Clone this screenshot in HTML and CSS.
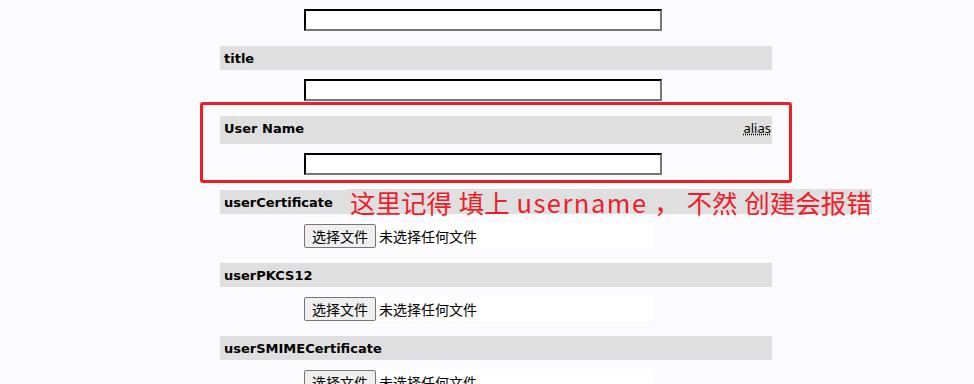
FILE: index.html
```html
<!DOCTYPE html>
<html lang="zh">
<head>
  <meta charset="UTF-8" />
  <title>Add Entry</title>
  <link rel="stylesheet" href="styles.css">
</head>
<body>

  <div class="form">
    <div class="field">
      <div class="value"><input type="text" class="text-input"></div>
    </div>

    <div class="field">
      <div class="label">title</div>
      <div class="value"><input type="text" class="text-input"></div>
    </div>

    <div class="field">
      <div class="label label-tall">User Name <abbr class="alias" title="uid">alias</abbr></div>
      <div class="value"><input type="text" class="text-input"></div>
    </div>

    <div class="field">
      <div class="label">userCertificate</div>
      <div class="value">
        <label class="file"><span class="file-btn">选择文件</span><span class="file-name">未选择任何文件</span></label>
      </div>
    </div>

    <div class="field">
      <div class="label">userPKCS12</div>
      <div class="value">
        <label class="file"><span class="file-btn">选择文件</span><span class="file-name">未选择任何文件</span></label>
      </div>
    </div>

    <div class="field">
      <div class="label">userSMIMECertificate</div>
      <div class="value">
        <label class="file"><span class="file-btn">选择文件</span><span class="file-name">未选择任何文件</span></label>
      </div>
    </div>

    <!-- screenshot annotation -->
    <div class="mark-box"></div>
    <div class="mark-note">这里记得 填上 <span class="latin">username</span> ， 不然 创建会报错</div>
  </div>

</body>
</html>
```

FILE: styles.css
```css
html, body {
  margin: 0;
  padding: 0;
  background-color: #fbfbfd;
  font-family: "DejaVu Sans", Verdana, sans-serif;
  color: #000;
}

.form {
  display: flow-root;
  position: relative;
  width: 552px;
  margin-left: 220px;
}

.label {
  display: flex;
  justify-content: space-between;
  align-items: center;
  height: 24px;
  padding: 0 1px 0 4px;
  background-color: #dfdfdf;
  font-size: 13px;
  font-weight: bold;
}

.label-tall {
  box-sizing: border-box;
  height: 28px;
  padding-bottom: 4px;
}

.alias {
  font-weight: normal;
  text-decoration: underline dotted;
  font-family: "Noto Sans", "DejaVu Sans", sans-serif;
}

.value {
  margin: 9px 0 15px 84px;
  height: 22px;
}

.text-input {
  display: block;
  box-sizing: border-box;
  width: 358px;
  height: 22px;
  margin: 0;
  border: 2px inset #767676;
  border-top-color: #222;
  border-left-color: #222;
  background: #fff;
}

.value:has(.file) {
  height: 25px;
}

.file {
  display: flex;
  align-items: center;
  width: 350px;
  height: 25px;
  background: #fff;
  font-family: "Noto Sans CJK SC", sans-serif;
  font-size: 14px;
}

.file-btn {
  box-sizing: border-box;
  height: 24px;
  width: 72px;
  line-height: 22px;
  text-align: center;
  border: 1px solid #767676;
  border-radius: 2px;
  background: #efefef;
  color: #000;
}

.file-name {
  margin-left: 3px;
}

.mark-box {
  position: absolute;
  left: -20px;
  top: 102px;
  width: 592px;
  height: 81px;
  box-sizing: border-box;
  border: 3px solid #ee1d2b;
  border-radius: 3px;
}

.mark-note {
  position: absolute;
  left: 127px;
  top: 189px;
  height: 25px;
  padding: 0 0 0 3px;
  background: #dfdfdf;
  color: #ee1d2b;
  font-family: "Noto Sans CJK SC", sans-serif;
  font-size: 25.5px;
  line-height: 25px;
  word-spacing: 1px;
  white-space: nowrap;
}

.latin {
  letter-spacing: 1.5px;
}
```
